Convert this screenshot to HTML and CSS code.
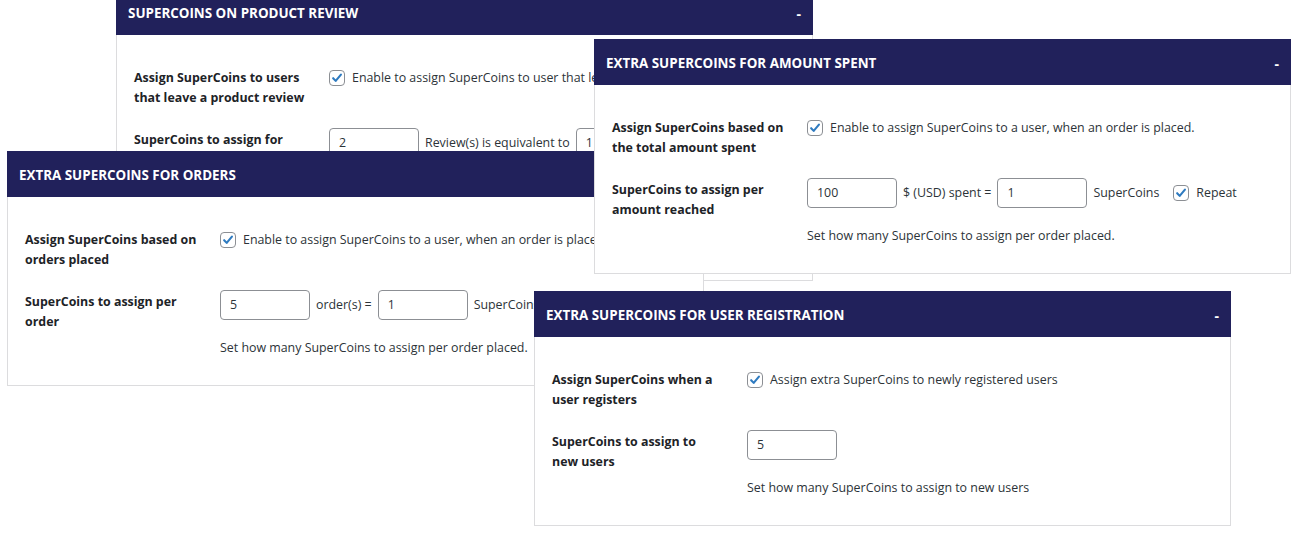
FILE: index.html
```html
<!DOCTYPE html>
<html lang="en">
<head>
<meta charset="utf-8">
<title>SuperCoins settings</title>
<link rel="stylesheet" href="styles.css">
</head>
<body>
<div class="canvas">

  <section class="panel p-review">
    <header class="panel-head"><h2>SUPERCOINS ON PRODUCT REVIEW</h2><span class="toggle">-</span></header>
    <div class="panel-body tall">
      <div class="row">
        <div class="label">Assign SuperCoins to users<br>that leave a product review</div>
        <div class="field">
          <label class="check"><span class="box"><svg viewBox="0 0 16 16"><path d="M3.6 8.2l2.9 3.1 6-7.2"/></svg></span>Enable to assign SuperCoins to user that leave a product review.</label>
        </div>
      </div>
      <div class="row">
        <div class="label second">SuperCoins to assign for<br>product reviews</div>
        <div class="field">
          <div class="inline"><span class="input">2</span><span>Review(s) is equivalent to</span><span class="input">1</span><span>SuperCoins</span></div>
          <p class="desc">Set how many SuperCoins to assign per product review.</p>
        </div>
      </div>
    </div>
  </section>

  <section class="panel p-orders">
    <header class="panel-head"><h2>EXTRA SUPERCOINS FOR ORDERS</h2><span class="toggle">-</span></header>
    <div class="panel-body">
      <div class="row">
        <div class="label">Assign SuperCoins based on<br>orders placed</div>
        <div class="field">
          <label class="check"><span class="box"><svg viewBox="0 0 16 16"><path d="M3.6 8.2l2.9 3.1 6-7.2"/></svg></span>Enable to assign SuperCoins to a user, when an order is placed.</label>
        </div>
      </div>
      <div class="row">
        <div class="label second">SuperCoins to assign per<br>order</div>
        <div class="field">
          <div class="inline"><span class="input">5</span><span>order(s) =</span><span class="input">1</span><span>SuperCoins</span></div>
          <p class="desc">Set how many SuperCoins to assign per order placed.</p>
        </div>
      </div>
    </div>
  </section>

  <section class="panel p-amount">
    <header class="panel-head"><h2>EXTRA SUPERCOINS FOR AMOUNT SPENT</h2><span class="toggle">-</span></header>
    <div class="panel-body">
      <div class="row">
        <div class="label">Assign SuperCoins based on<br>the total amount spent</div>
        <div class="field">
          <label class="check"><span class="box"><svg viewBox="0 0 16 16"><path d="M3.6 8.2l2.9 3.1 6-7.2"/></svg></span>Enable to assign SuperCoins to a user, when an order is placed.</label>
        </div>
      </div>
      <div class="row">
        <div class="label second">SuperCoins to assign per<br>amount reached</div>
        <div class="field">
          <div class="inline"><span class="input">100</span><span>$ (USD) spent =</span><span class="input">1</span><span>SuperCoins</span><label class="check repeat"><span class="box"><svg viewBox="0 0 16 16"><path d="M3.6 8.2l2.9 3.1 6-7.2"/></svg></span>Repeat</label></div>
          <p class="desc">Set how many SuperCoins to assign per order placed.</p>
        </div>
      </div>
    </div>
  </section>

  <section class="panel p-reg">
    <header class="panel-head"><h2>EXTRA SUPERCOINS FOR USER REGISTRATION</h2><span class="toggle">-</span></header>
    <div class="panel-body">
      <div class="row">
        <div class="label">Assign SuperCoins when a<br>user registers</div>
        <div class="field">
          <label class="check"><span class="box"><svg viewBox="0 0 16 16"><path d="M3.6 8.2l2.9 3.1 6-7.2"/></svg></span>Assign extra SuperCoins to newly registered users</label>
        </div>
      </div>
      <div class="row">
        <div class="label second">SuperCoins to assign to<br>new users</div>
        <div class="field">
          <div class="inline"><span class="input">5</span></div>
          <p class="desc">Set how many SuperCoins to assign to new users</p>
        </div>
      </div>
    </div>
  </section>

</div>
</body>
</html>
```

FILE: styles.css
```css
* { box-sizing: border-box; }

html, body {
  margin: 0;
  padding: 0;
  background: #ffffff;
}

body {
  font-family: "Open Sans", "Noto Sans", "Liberation Sans", sans-serif;
  font-size: 12.4px;
  line-height: 20px;
  color: #2c3338;
}

.canvas {
  position: relative;
  width: 1300px;
  height: 540px;
  overflow: hidden;
}

/* windows on a free canvas */
.panel {
  position: absolute;
  width: 697px;
  background: #ffffff;
}
.p-review { left: 116px; top: -11px; z-index: 1; }
.p-orders { left: 7px;   top: 151px; z-index: 2; }
.p-amount { left: 594px; top: 39px;  z-index: 3; }
.p-reg    { left: 534px; top: 291px; z-index: 4; }

.panel-head {
  height: 46px;
  background: #21215b;
  color: #ffffff;
  display: flex;
  align-items: center;
  justify-content: space-between;
  padding: 2px 12px 0 12px;
}
.panel-head h2 {
  margin: 0;
  font-size: 13.4px;
  font-weight: 700;
  line-height: 20px;
}
.toggle {
  font-weight: 700;
  font-size: 14px;
  padding-top: 2px;
}

.panel-body {
  border: 1px solid #dcdcde;
  border-top: none;
  padding: 33px 17px 27px 17px;
  display: flex;
  flex-direction: column;
  gap: 20px;
}
.panel-body.tall { padding-bottom: 84px; }

.row {
  display: grid;
  grid-template-columns: 195px 1fr;
}

.label {
  font-weight: 700;
  color: #1d2327;
  white-space: nowrap;
}
.label.second { padding-top: 2px; }

.field { min-width: 0; white-space: nowrap; }

.check {
  display: inline-flex;
  align-items: center;
  gap: 7px;
}
.box {
  width: 16px;
  height: 16px;
  border: 1px solid #8c8f94;
  border-radius: 4px;
  background: #ffffff;
  display: inline-flex;
  align-items: center;
  justify-content: center;
}
.box svg {
  width: 14px;
  height: 14px;
  fill: none;
  stroke: #2f7bc0;
  stroke-width: 2.4;
  stroke-linecap: round;
  stroke-linejoin: round;
}
.check.repeat { margin-left: 8px; }

.inline {
  display: flex;
  align-items: center;
  gap: 6px;
  height: 30px;
}
.input {
  width: 90px;
  height: 30px;
  border: 1px solid #8c8f94;
  border-radius: 4px;
  padding: 0 9px;
  display: flex;
  align-items: center;
  color: #2c3338;
  background: #ffffff;
}

.desc {
  margin: 18px 0 0 0;
}
```
